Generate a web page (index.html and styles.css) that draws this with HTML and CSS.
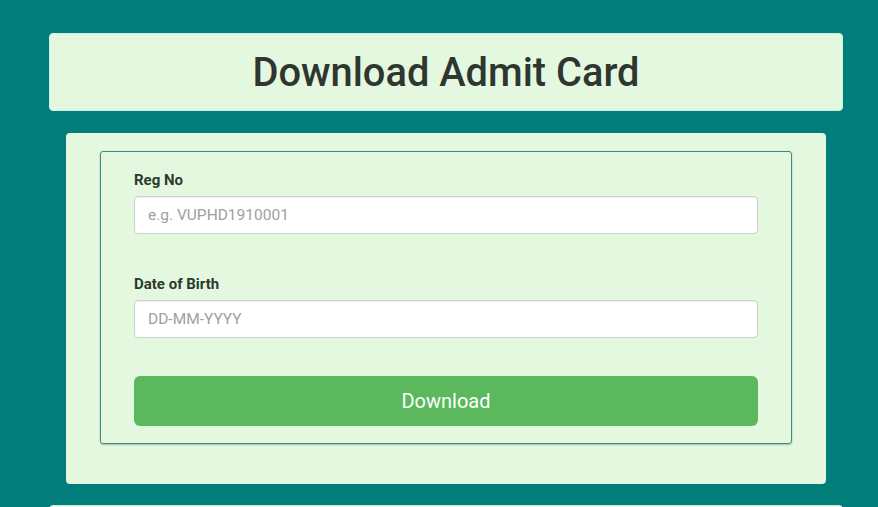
FILE: index.html
```html
<!DOCTYPE html>
<html lang="en">
<head>
    <meta charset="UTF-8">
    <meta name="viewport" content="width=device-width, initial-scale=1.0">
    <title>Download Admit Card</title>
    <link rel="stylesheet" href="styles.css">
</head>
<body>

    <!-- Page title -->
    <header class="title-box">
        <h1>Download Admit Card</h1>
    </header>

    <!-- Admit card form -->
    <section class="card">
        <form class="admit-form">
            <div class="field">
                <label for="reg">Reg No</label>
                <input type="text" id="reg" placeholder="e.g. VUPHD1910001">
            </div>
            <div class="field">
                <label for="dob">Date of Birth</label>
                <input type="text" id="dob" placeholder="DD-MM-YYYY">
            </div>
            <button type="button" class="btn-download">Download</button>
        </form>
    </section>

    <div class="title-box next-box"></div>

</body>
</html>
```

FILE: styles.css
```css
/* General styles */
html {
    overflow: hidden;
}

body {
    font-family: 'Roboto', 'Liberation Sans', sans-serif;
    margin: 0;
    padding: 33px 35px 0 49px;
    background-color: #017d7a;
}

/* Title box */
.title-box {
    background-color: #e4f8e0;
    border: 1px solid #c9f3ea;
    border-radius: 4px;
    height: 78px;
    box-sizing: border-box;
    display: flex;
    align-items: center;
    justify-content: center;
}

.title-box h1 {
    margin: 0;
    font-size: 39.8px;
    font-weight: 500;
    color: #2e362f;
}

.next-box {
    margin-top: 21px;
}

/* Card */
.card {
    background-color: #e4f8e0;
    border-radius: 4px;
    margin: 22px 17px 0 17px;
    padding: 18px 34px 40px 34px;
}

.admit-form {
    border: 1px solid #3a8a88;
    border-radius: 3px;
    box-shadow: 0 1px 2px rgba(0, 0, 0, 0.25);
    padding: 18px 33px 17px 33px;
}

.field {
    display: flex;
    flex-direction: column;
    margin-bottom: 40px;
}

.field + .field {
    margin-bottom: 38px;
}

.field label {
    font-size: 15px;
    font-weight: 700;
    color: #2b3a2c;
    line-height: 20px;
    margin-bottom: 6px;
}

.field input {
    height: 38px;
    box-sizing: border-box;
    border: 1px solid #cfcfcf;
    border-radius: 4px;
    padding: 0 13px;
    font-family: inherit;
    font-size: 15.5px;
    background-color: #fff;
    box-shadow: inset 0 1px 1px rgba(0, 0, 0, 0.06);
}

.field input::placeholder {
    color: #a0a0a0;
}

/* Download button */
.btn-download {
    display: block;
    width: 100%;
    height: 50px;
    border: none;
    border-radius: 6px;
    background-color: #5cb85c;
    color: #fff;
    font-family: inherit;
    font-size: 20px;
    cursor: pointer;
}

.btn-download:hover {
    background-color: #4cae4c;
}
```
